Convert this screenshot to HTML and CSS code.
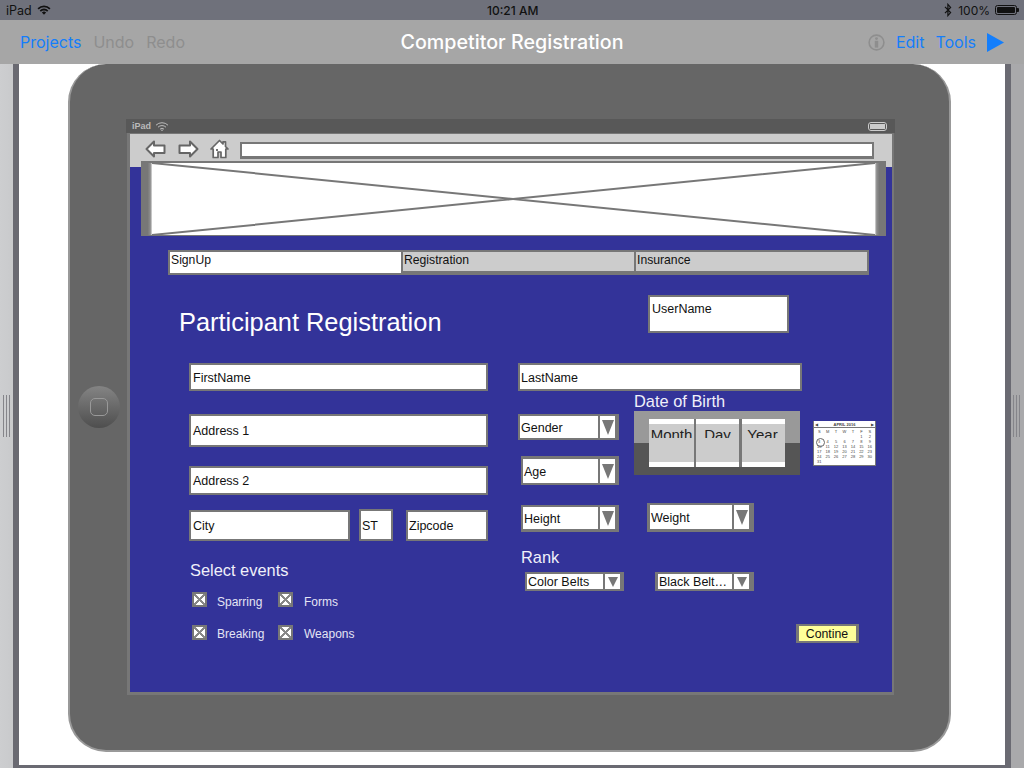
FILE: index.html
```html
<!DOCTYPE html>
<html lang="en">
<head>
<meta charset="utf-8">
<title>Competitor Registration</title>
<link rel="stylesheet" href="styles.css">
</head>
<body>
<div class="app">
  <header class="status">
    <div class="status-left">
      <span>iPad</span>
      <svg class="wifi" viewBox="0 0 14 10" width="14" height="10"><path d="M0.5 3.2A9 9 0 0 1 13.5 3.2L12.3 4.5A7.3 7.3 0 0 0 1.7 4.5Z M2.7 5.4A6 6 0 0 1 11.3 5.4L10.1 6.7A4.3 4.3 0 0 0 3.9 6.7Z M4.9 7.6A3 3 0 0 1 9.1 7.6L7 9.8Z" fill="#111"/></svg>
    </div>
    <div class="status-time">10:21 AM</div>
    <div class="status-right">
      <svg class="bt" viewBox="0 0 8 14" width="8" height="14"><path d="M1 3.8L6.6 9.6L3.9 12.6V1.4L6.6 4.4L1 10.2" fill="none" stroke="#111" stroke-width="1.2"/></svg>
      <span class="pct">100%</span>
      <span class="battery"><span class="battery-fill"></span></span>
    </div>
  </header>
  <nav class="toolbar">
    <div class="tb-left">
      <a class="tb-link">Projects</a>
      <a class="tb-off">Undo</a>
      <a class="tb-off">Redo</a>
    </div>
    <div class="tb-title">Competitor Registration</div>
    <div class="tb-right">
      <svg class="info" viewBox="0 0 17 17" width="17" height="17"><circle cx="8.5" cy="8.5" r="7.4" fill="none" stroke="#8e8e8e" stroke-width="1.6"/><circle cx="8.5" cy="4.6" r="1.4" fill="#8e8e8e"/><rect x="6.8" y="6.8" width="3.4" height="6.8" fill="#8e8e8e"/></svg>
      <a class="tb-link">Edit</a>
      <a class="tb-link">Tools</a>
      <svg class="play" viewBox="0 0 17 19" width="17" height="19"><path d="M0 0L17 9.5L0 19Z" fill="#147efb"/></svg>
    </div>
  </nav>
  <main class="workspace">
    <aside class="gutter gutter-l"><span class="grip"></span></aside>
    <section class="page">
      <div class="device">
        <div class="home-btn"><span class="home-sq"></span></div>
        <div class="screen">
          <div class="mock-status">
            <span class="ms-left">iPad
              <svg viewBox="0 0 14 9" width="14" height="9"><path d="M1 3.2A8.5 8.5 0 0 1 13 3.2M3 5.2A5.7 5.7 0 0 1 11 5.2M5 7.2A2.8 2.8 0 0 1 9 7.2" fill="none" stroke="#bbb" stroke-width="1"/><circle cx="7" cy="8.2" r=".8" fill="#bbb"/></svg>
            </span>
            <span class="ms-batt"><span class="ms-batt-fill"></span></span>
          </div>
          <div class="browser">
            <div class="browser-bar">
              <svg class="ic" viewBox="0 0 21 18" width="21" height="18"><path d="M1.5 9L9 1.5V5.5H19.5V13H9V16.5Z" fill="#fff" stroke="#666" stroke-width="2" stroke-linejoin="round"/></svg>
              <svg class="ic ic-fwd" viewBox="0 0 21 18" width="21" height="18"><path d="M19.5 9L12 1.5V5.5H1.5V13H12V16.5Z" fill="#fff" stroke="#666" stroke-width="2" stroke-linejoin="round"/></svg>
              <svg class="ic ic-home" viewBox="0 0 19 20" width="19" height="20"><path d="M1 10L9.5 1.5L13 5V2.8H15.5V7.5L18 10H15.8V18.5H11V13H8V18.5H3.2V10Z" fill="#fff" stroke="#666" stroke-width="1.7" stroke-linejoin="round"/><circle cx="7" cy="11" r="1" fill="#444"/></svg>
              <div class="url"></div>
            </div>
            <div class="form">
              <div class="banner">
                <svg class="banner-x" viewBox="0 0 723 73" preserveAspectRatio="none"><path d="M0 0L723 73M723 0L0 73" stroke="#777" stroke-width="2" fill="none"/></svg>
              </div>

              <div class="tabs">
                <div class="tab tab-active">SignUp</div>
                <div class="tab tab-2">Registration</div>
                <div class="tab tab-3">Insurance</div>
              </div>

              <h1 class="heading">Participant Registration</h1>
              <div class="f f-user">UserName</div>

              <div class="f f-first">FirstName</div>
              <div class="f f-last">LastName</div>
              <div class="f f-addr1">Address 1</div>
              <div class="f f-addr2">Address 2</div>
              <div class="f f-city">City</div>
              <div class="f f-st">ST</div>
              <div class="f f-zip">Zipcode</div>

              <div class="lbl l-dob">Date of Birth</div>
              <div class="dob">
                <div class="wheel w-month"><span>Month</span></div>
                <div class="wheel w-day"><span>Day</span></div>
                <div class="wheel w-year"><span>Year</span></div>
              </div>

              <div class="cal">
                <div class="cal-head"><span>◀</span><b>APRIL 2016</b><span>▶</span></div>
                <div class="cal-grid">
                  <i>S</i><i>M</i><i>T</i><i>W</i><i>T</i><i>F</i><i>S</i>
                  <i></i><i></i><i></i><i></i><i></i><i>1</i><i>2</i>
                  <i class="cal-today">3</i><i>4</i><i>5</i><i>6</i><i>7</i><i>8</i><i>9</i>
                  <i>10</i><i>11</i><i>12</i><i>13</i><i>14</i><i>15</i><i>16</i>
                  <i>17</i><i>18</i><i>19</i><i>20</i><i>21</i><i>22</i><i>23</i>
                  <i>24</i><i>25</i><i>26</i><i>27</i><i>28</i><i>29</i><i>30</i>
                  <i>31</i>
                </div>
              </div>

              <div class="sel s-gender"><span class="sel-t">Gender</span><span class="sel-b"><span class="tri"></span></span></div>
              <div class="sel s-age"><span class="sel-t">Age</span><span class="sel-b"><span class="tri"></span></span></div>
              <div class="sel s-height"><span class="sel-t">Height</span><span class="sel-b"><span class="tri"></span></span></div>
              <div class="sel s-weight"><span class="sel-t">Weight</span><span class="sel-b"><span class="tri"></span></span></div>

              <div class="lbl l-rank">Rank</div>
              <div class="sel sel-sm s-color"><span class="sel-t">Color Belts</span><span class="sel-b"><span class="tri"></span></span></div>
              <div class="sel sel-sm s-black"><span class="sel-t">Black Belt…</span><span class="sel-b"><span class="tri"></span></span></div>

              <div class="lbl l-events">Select events</div>
              <div class="chk c-spar"></div><div class="opt o-spar">Sparring</div>
              <div class="chk c-forms"></div><div class="opt o-forms">Forms</div>
              <div class="chk c-break"></div><div class="opt o-break">Breaking</div>
              <div class="chk c-weap"></div><div class="opt o-weap">Weapons</div>

              <div class="continue">Contine</div>
            </div>
          </div>
        </div>
      </div>
    </section>
    <aside class="gutter gutter-r"><span class="grip"></span></aside>
  </main>
</div>
</body>
</html>
```

FILE: styles.css
```css
* { box-sizing: border-box; }
html, body { margin: 0; padding: 0; }
body { font-family: "Liberation Sans", Arial, sans-serif; background: #fff; }
.app { width: 1024px; height: 768px; display: flex; flex-direction: column; overflow: hidden; }

.status { height: 20px; flex: none; background: #6f717b; display: flex; align-items: center; justify-content: space-between; padding: 0 7px 0 6px; font-family: Inter, "Liberation Sans", sans-serif; font-size: 12.5px; color: #111; position: relative; }
.status-left { display: flex; align-items: center; gap: 5px; }
.status-time { position: absolute; left: 487px; font-weight: 500; font-size: 12px; }
.status-right { display: flex; align-items: center; gap: 5px; }
.pct { font-size: 12px; }
.bt { margin-right: 1px; }
.battery { width: 22px; height: 10px; border: 1px solid #111; border-radius: 2.5px; padding: 1px; display: block; position: relative; }
.battery::after { content: ""; position: absolute; right: -3px; top: 2px; width: 2px; height: 4px; background: #111; border-radius: 0 1px 1px 0; }
.battery-fill { display: block; height: 100%; background: #111; border-radius: 1px; }

.toolbar { height: 44px; flex: none; background: #a6a6a6; display: flex; align-items: center; justify-content: space-between; padding: 0 20px; font-family: Inter, "Liberation Sans", sans-serif; font-size: 16px; position: relative; }
.tb-left { display: flex; gap: 12px; }
.tb-link { color: #147efb; }
.tb-off { color: #8e8e8e; }
.tb-title { position: absolute; left: 0; right: 0; text-align: center; color: #fff; font-size: 19.7px; font-weight: 500; }
.tb-right { display: flex; align-items: center; gap: 11px; position: relative; }
.info { margin-right: 0; }

.workspace { flex: 1; display: flex; min-height: 0; }
.gutter { flex: none; position: relative; display: flex; align-items: center; }
.gutter-l { width: 19px; background: linear-gradient(90deg, #cdced0 0, #c9cacc 68%, #6a6a72 68%, #6a6a72 100%); padding-left: 3px; }
.gutter-r { width: 19px; background: linear-gradient(90deg, #6a6a72 0, #6a6a72 32%, #a9a9ab 32%, #a9a9ab 100%); padding-left: 8px; }
.grip { display: block; width: 7px; height: 42px; margin-top: -1px; border-left: 1px solid #85858a; border-right: 1px solid #85858a; position: relative; }
.grip::after { content: ""; position: absolute; left: 2px; top: 0; bottom: 0; width: 1px; background: #85858a; }

.page { flex: 1; min-width: 0; background: #fff; border-bottom: 3px solid #6a6a72; padding-left: 49px; }

.device { width: 883px; height: 688px; background: #666; border: 2px solid #999; border-top: 0; border-radius: 38px; padding: 55px 0 0 56px; position: relative; }
.home-btn { position: absolute; left: 8px; top: 322px; width: 42px; height: 42px; border-radius: 50%; background: linear-gradient(180deg, #848484, #4e4e4e); display: flex; align-items: center; justify-content: center; }
.home-sq { display: block; width: 18px; height: 18px; border: 1.5px solid #999; border-radius: 5px; }

.screen { width: 769px; }
.mock-status { height: 14px; background: #585858; display: flex; align-items: center; justify-content: space-between; padding: 0 8px 0 6px; color: #bbb; font-size: 9px; font-weight: bold; }
.ms-left { display: flex; align-items: center; gap: 4px; }
.ms-batt { width: 19px; height: 9px; border: 1px solid #ccc; border-radius: 3px; padding: 1px; display: block; }
.ms-batt-fill { display: block; height: 100%; background: #ccc; }

.browser { width: 767px; margin-left: 1px; height: 562px; border: 3px solid #777; border-top-width: 1px; border-right-width: 2px; background: #333399; position: relative; }
.browser-bar { height: 33px; background: #ccc; display: flex; align-items: center; padding: 0 0 0 15px; position: relative; }
.ic { flex: none; margin-top: -3px; }
.ic-fwd { margin-left: 12px; }
.ic-home { margin-left: 11px; }
.url { width: 634px; height: 17px; margin-left: 11px; margin-top: -1px; border: 2px solid #777; border-bottom-width: 3px; background: #fff; flex: none; }

/* The mockup's surface is a free canvas: each widget's position is its content. */
.form { position: absolute; left: -130px; top: -134px; width: 1px; height: 1px; }
.form > * { position: absolute; }

.banner { left: 141px; top: 161px; width: 745px; height: 75px; background: #fff; border: 2px solid #777; border-bottom-width: 1px; border-left-width: 0; border-right-width: 0; }
.banner::before, .banner::after { content: ""; position: absolute; top: 0; bottom: 0; width: 11px; }
.banner::before { left: 0; background: linear-gradient(90deg, #777 60%, #8e8e8e 85%, #ddd); }
.banner::after { right: 0; background: linear-gradient(270deg, #777 60%, #8e8e8e 85%, #ddd); }
.banner-x { position: absolute; left: 11px; top: 0; width: 723px; height: 72px; }

.tabs { left: 168px; top: 250px; width: 701px; height: 25px; border: 2px solid #777; display: flex; font-size: 12.2px; color: #111; background: #fff; }
.tab { flex: none; background: #ccc; border-left: 2px solid #777; border-bottom: 2px solid #777; padding: 1px 0 0 1px; }
.tab-active { width: 231px; background: #fff; border: 0; padding-left: 1px; }
.tab-2 { width: 233px; }
.tab-3 { flex: 1; }

.heading { left: 179px; top: 306px; margin: 0; font-size: 25.4px; line-height: 32px; font-weight: normal; color: #fff; white-space: nowrap; }

.f { background: #fff; border: 2px solid #777; font-size: 12.5px; color: #111; padding: 1px 0 0 2px; display: flex; align-items: center; white-space: nowrap; }
.f-user { left: 648px; top: 295px; width: 141px; height: 38px; align-items: flex-start; padding-top: 5px; }
.f-first { left: 189px; top: 363px; width: 299px; height: 28px; }
.f-last { left: 518px; top: 363px; width: 284px; height: 28px; padding-left: 1px; }
.f-addr1 { left: 189px; top: 414px; width: 299px; height: 33px; }
.f-addr2 { left: 189px; top: 466px; width: 299px; height: 29px; padding-top: 0; }
.f-city { left: 189px; top: 510px; width: 161px; height: 31px; }
.f-st { left: 359px; top: 509px; width: 34px; height: 32px; padding-left: 1px; }
.f-zip { left: 406px; top: 510px; width: 82px; height: 31px; padding-left: 1px; }

.lbl { color: #f0f0fa; font-size: 16.4px; line-height: 20px; white-space: nowrap; }
.l-dob { left: 634px; top: 391px; }
.l-rank { left: 521px; top: 547px; }
.l-events { left: 190px; top: 560px; }

.dob { left: 634px; top: 411px; width: 166px; height: 64px; background: linear-gradient(180deg, #999 50%, #555 50%); }
.wheel { position: absolute; top: 8px; height: 48px; background: linear-gradient(180deg, #fff 5px, #ccc 5px, #ccc 43px, #fff 43px); overflow: hidden; text-align: center; font-size: 15px; color: #222; }
.wheel span { display: block; height: 19px; padding-top: 7px; line-height: 17px; overflow: hidden; }
.w-month { left: 15px; width: 47px; border-right: 2px solid #777; }
.w-day { left: 62px; width: 46px; border-right: 3px solid #777; }
.w-year { left: 108px; width: 43px; padding-right: 2px; }

.cal { left: 813px; top: 421px; width: 63px; height: 45px; background: #fff; border: 1px solid #777; border-top-width: 0; color: #444; font-size: 4px; line-height: 5px; overflow: hidden; }
.cal-head { display: flex; justify-content: space-between; height: 7px; padding: 1px 1px 0; border-bottom: 1px solid #777; }
.cal-head b { font-weight: bold; }
.cal-grid { display: grid; grid-template-columns: repeat(7, 1fr); grid-auto-rows: 5px; padding: 1px 1px 0; text-align: center; }
.cal-grid i { font-style: normal; position: relative; }
.cal-today::after { content: ""; position: absolute; left: 1px; top: -1px; width: 7px; height: 7px; border: 1px solid #666; border-radius: 50%; }

.sel { background: #777; padding: 2px 4px 2px 2px; display: flex; gap: 2px; font-size: 12.5px; color: #111; white-space: nowrap; overflow: hidden; }
.sel-t { flex: 1; background: #fff; padding: 1px 0 0 1px; display: flex; align-items: center; min-width: 0; }
.sel-b { flex: none; width: 15px; background: #fff; display: flex; align-items: center; justify-content: center; }
.tri { width: 0; height: 0; border-left: 6px solid transparent; border-right: 6px solid transparent; border-top: 15px solid #777; }
.sel-sm .tri { border-left-width: 5px; border-right-width: 5px; border-top-width: 10px; }
.s-gender { left: 518px; top: 414px; width: 101px; height: 26px; }
.s-age { left: 521px; top: 456px; width: 98px; height: 29px; padding-top: 3px; }
.s-height { left: 521px; top: 505px; width: 98px; height: 27px; padding-bottom: 3px; }
.s-weight { left: 647px; top: 503px; width: 107px; height: 29px; padding: 2px 5px 3px 3px; }
.s-color { left: 525px; top: 572px; width: 99px; height: 19px; padding: 2px 4px 2px 2px; }
.s-black { left: 655px; top: 572px; width: 99px; height: 19px; padding: 2px 5px 2px 3px; }
.sel-sm .sel-t { padding-top: 0; }

.chk { width: 15px; height: 15px; border: 2px solid #777; background: linear-gradient(45deg, #fff 44%, #888 44%, #888 56%, #fff 56%), #fff; position: absolute; overflow: hidden; }
.chk::after { content: ""; position: absolute; inset: 0; background: linear-gradient(-45deg, transparent 44%, #888 44%, #888 56%, transparent 56%); }
.c-spar { left: 192px; top: 592px; }
.c-forms { left: 278px; top: 592px; }
.c-break { left: 192px; top: 625px; }
.c-weap { left: 278px; top: 625px; }
.opt { color: #e4e4f4; font-size: 12px; line-height: 16px; white-space: nowrap; }
.o-spar { left: 217px; top: 594px; }
.o-forms { left: 304px; top: 594px; }
.o-break { left: 217px; top: 626px; }
.o-weap { left: 304px; top: 626px; }

.continue { left: 796px; top: 624px; width: 63px; height: 19px; background: #ffff99; border: 3px solid #777; border-width: 2px 3px; font-size: 12.3px; color: #111; display: flex; align-items: center; justify-content: center; padding-right: 1px; }
```
